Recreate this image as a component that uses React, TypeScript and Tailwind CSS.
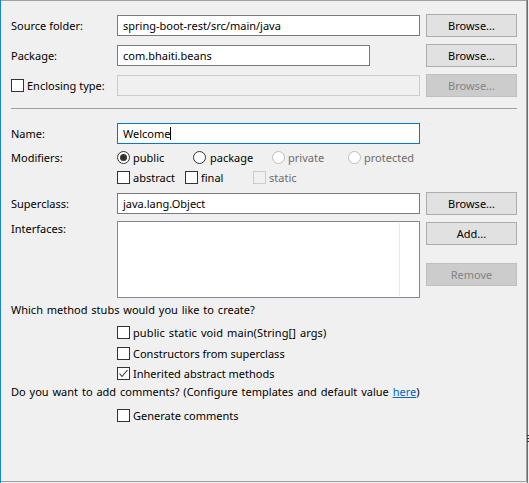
import React from "react";

function Button({ children, disabled }: { children: React.ReactNode; disabled?: boolean }) {
  return (
    <div
      className={
        disabled
          ? "w-[91px] h-[23px] shrink-0 border border-[#bfbfbf] bg-[#cccccc] text-[#838383] flex items-center justify-center"
          : "w-[91px] h-[23px] shrink-0 border border-[#adadad] bg-[#e1e1e1] text-black flex items-center justify-center"
      }
    >
      {children}
    </div>
  );
}

function Checkbox({ checked, disabled }: { checked?: boolean; disabled?: boolean }) {
  return (
    <div
      className={
        disabled
          ? "w-[13px] h-[13px] shrink-0 border border-[#cccccc] bg-[#f0f0f0]"
          : "w-[13px] h-[13px] shrink-0 border border-[#333333] bg-white flex items-center justify-center"
      }
    >
      {checked && (
        <svg width="11" height="11" viewBox="0 0 11 11">
          <path d="M1.5 5.5 L4 8.5 L9.5 2" fill="none" stroke="#333333" strokeWidth="1.1" />
        </svg>
      )}
    </div>
  );
}

function Radio({ checked, disabled }: { checked?: boolean; disabled?: boolean }) {
  return (
    <div
      className={
        disabled
          ? "w-[13px] h-[13px] shrink-0 rounded-full border border-[#bcbcbc] bg-white"
          : "w-[13px] h-[13px] shrink-0 rounded-full border border-[#333333] bg-white flex items-center justify-center"
      }
    >
      {checked && <div className="w-[7px] h-[7px] rounded-full bg-[#333333]" />}
    </div>
  );
}

function TextField({ value, className }: { value?: string; className: string }) {
  return (
    <div className={"h-[21px] shrink-0 border border-[#7a7a7a] bg-white pl-[5px] flex items-center " + className}>
      {value}
    </div>
  );
}

export default function App() {
  return (
    <div className="w-[529px] h-[483px] bg-[#f0f0f0] flex font-['Noto_Sans','Open_Sans',sans-serif] text-[11px] leading-[15px] text-black">
      <div className="w-px h-full shrink-0 bg-[#1883d7]" />
      <div className="w-[526px] h-[482px] shrink-0 border-t border-r border-b border-[#a0a0a0] flex flex-col pl-[10px] pr-[9px]">
        {/* Source folder */}
        <div className="mt-[13px] h-[23px] flex items-center">
          <div className="w-[106px] shrink-0">Source folder:</div>
          <TextField value="spring-boot-rest/src/main/java" className="w-[303px]" />
          <div className="ml-[6px]">
            <Button>Browse...</Button>
          </div>
        </div>
        {/* Package */}
        <div className="mt-[7px] h-[23px] flex items-center">
          <div className="w-[106px] shrink-0">Package:</div>
          <TextField value="com.bhaiti.beans" className="w-[253px]" />
          <div className="ml-[56px]">
            <Button>Browse...</Button>
          </div>
        </div>
        {/* Enclosing type */}
        <div className="mt-[7px] h-[23px] flex items-center">
          <div className="w-[106px] shrink-0 flex items-center gap-[3px]">
            <Checkbox />
            <span>Enclosing type:</span>
          </div>
          <div className="w-[303px] h-[21px] shrink-0 border border-[#cccccc] bg-[#f0f0f0]" />
          <div className="ml-[6px]">
            <Button disabled>Browse...</Button>
          </div>
        </div>
        {/* Separator */}
        <div className="mt-[11px] h-px bg-[#a0a0a0]" />
        {/* Name */}
        <div className="mt-[13px] h-[23px] flex items-center">
          <div className="w-[106px] shrink-0">Name:</div>
          <div className="w-[303px] h-[21px] shrink-0 border border-[#0078d7] bg-white pl-[5px] flex items-center">
            <span>Welcome</span>
            <span className="inline-block w-px h-[13px] bg-black" />
          </div>
        </div>
        {/* Modifiers */}
        <div className="mt-[6px] h-[13px] flex items-center">
          <div className="w-[106px] shrink-0">Modifiers:</div>
          <div className="w-[76px] shrink-0 flex items-center gap-[3px]">
            <Radio checked />
            <span>public</span>
          </div>
          <div className="w-[79px] shrink-0 flex items-center gap-[4px]">
            <Radio />
            <span>package</span>
          </div>
          <div className="w-[76px] shrink-0 flex items-center gap-[3px] text-[#6d6d6d]">
            <Radio disabled />
            <span>private</span>
          </div>
          <div className="flex items-center gap-[3px] text-[#6d6d6d]">
            <Radio disabled />
            <span>protected</span>
          </div>
        </div>
        <div className="mt-[7px] h-[13px] flex items-center pl-[106px]">
          <div className="w-[68px] shrink-0 flex items-center gap-[3px]">
            <Checkbox />
            <span>abstract</span>
          </div>
          <div className="w-[68px] shrink-0 flex items-center gap-[3px]">
            <Checkbox />
            <span>final</span>
          </div>
          <div className="flex items-center gap-[3px] text-[#6d6d6d]">
            <Checkbox disabled />
            <span>static</span>
          </div>
        </div>
        {/* Superclass */}
        <div className="mt-[8px] h-[23px] flex items-center">
          <div className="w-[106px] shrink-0">Superclass:</div>
          <TextField value="java.lang.Object" className="w-[303px]" />
          <div className="ml-[6px]">
            <Button>Browse...</Button>
          </div>
        </div>
        {/* Interfaces */}
        <div className="mt-[6px] flex">
          <div className="w-[106px] shrink-0">Interfaces:</div>
          <div className="w-[303px] h-[77px] shrink-0 border border-[#828790] bg-white flex py-px">
            <div className="w-[282px] h-full border-r border-[#e3e9ef]" />
          </div>
          <div className="ml-[6px] flex flex-col pt-px">
            <Button>Add...</Button>
            <div className="mt-[18px]">
              <Button disabled>Remove</Button>
            </div>
          </div>
        </div>
        {/* Method stubs */}
        <div className="mt-[4px] h-[15px] [word-spacing:1px]">Which method stubs would you like to create?</div>
        <div className="mt-[9px] h-[13px] flex items-center gap-[3px] pl-[106px]">
          <Checkbox />
          <span className="[word-spacing:1px] tracking-[0.1px]">public static void main(String[] args)</span>
        </div>
        <div className="mt-[8px] h-[13px] flex items-center gap-[3px] pl-[106px]">
          <Checkbox />
          <span>Constructors from superclass</span>
        </div>
        <div className="mt-[7px] h-[13px] flex items-center gap-[3px] pl-[106px]">
          <Checkbox checked />
          <span>Inherited abstract methods</span>
        </div>
        <div className="mt-[4px] h-[15px] [word-spacing:1px]">
          Do you want to add comments? (Configure templates and default value{" "}
          <span className="text-[#0066cc] underline">here</span>)
        </div>
        <div className="mt-[10px] h-[13px] flex items-center gap-[3px] pl-[106px]">
          <Checkbox />
          <span>Generate comments</span>
        </div>
      </div>
      <div className="w-px h-full shrink-0 bg-[#1883d7] relative">
        <div className="absolute left-0 top-[435px] w-[2px] h-px bg-[#333333]" />
        <div className="absolute left-0 top-[438px] w-[2px] h-px bg-[#333333]" />
        <div className="absolute left-0 top-[441px] w-[2px] h-px bg-[#333333]" />
      </div>
      <div className="w-px h-full shrink-0 bg-[#f0f0f0]" />
    </div>
  );
}
